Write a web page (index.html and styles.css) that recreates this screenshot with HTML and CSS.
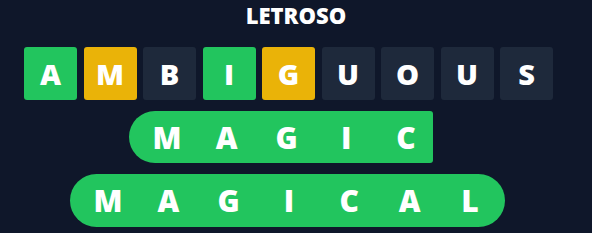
FILE: index.html
```html
<!DOCTYPE html>
<html>
<head>
<meta charset="utf-8">
<link rel="stylesheet" href="styles.css">
</head>
<body>
<div class="app">
  <h1 class="title">LETROSO</h1>
  <div class="board">
    <div class="tiles">
      <div class="tile green">A</div>
      <div class="tile yellow">M</div>
      <div class="tile dark">B</div>
      <div class="tile green">I</div>
      <div class="tile yellow">G</div>
      <div class="tile dark">U</div>
      <div class="tile dark">O</div>
      <div class="tile dark">U</div>
      <div class="tile dark">S</div>
    </div>
    <div class="pill pill-magic">
      <span>M</span><span>A</span><span>G</span><span>I</span><span>C</span>
    </div>
    <div class="pill pill-magical">
      <span>M</span><span>A</span><span>G</span><span>I</span><span>C</span><span>A</span><span>L</span>
    </div>
  </div>
</div>
</body>
</html>
```
FILE: styles.css
```css
html, body {
  margin: 0;
  padding: 0;
  background: #0f172a;
  width: 592px;
  height: 233px;
  overflow: hidden;
}
.app {
  font-family: "Open Sans", "Liberation Sans", sans-serif;
  color: #ffffff;
}
.title {
  margin: 0;
  padding-top: 2px;
  height: 26px;
  line-height: 26px;
  font-size: 22px;
  font-weight: 800;
  text-align: center;
  letter-spacing: 0;
}
.board {
  display: flex;
  flex-direction: column;
  align-items: flex-start;
  gap: 11px;
  padding-top: 19px;
  padding-left: 24px;
}
.tiles {
  display: flex;
  gap: 6.5px;
}
.tile {
  width: 53px;
  height: 53px;
  border-radius: 3px;
  display: flex;
  align-items: center;
  justify-content: center;
  font-size: 29px;
  font-weight: 800;
}
.green { background: #22c55e; }
.yellow { background: #eab308; }
.dark { background: #1e293b; }
.pill {
  height: 52px;
  background: #22c55e;
  display: flex;
  align-items: center;
  justify-content: space-between;
  font-size: 30px;
  font-weight: 800;
  box-sizing: border-box;
}
.pill span {
  width: 30px;
  text-align: center;
}
.pill-magic {
  margin-left: 105px;
  width: 304px;
  border-radius: 26px 3px 3px 26px;
  padding: 0 12px 0 23px;
}
.pill-magical {
  margin-left: 46px;
  width: 435px;
  height: 53px;
  border-radius: 27px;
  padding: 0 20px 0 23px;
}
```
